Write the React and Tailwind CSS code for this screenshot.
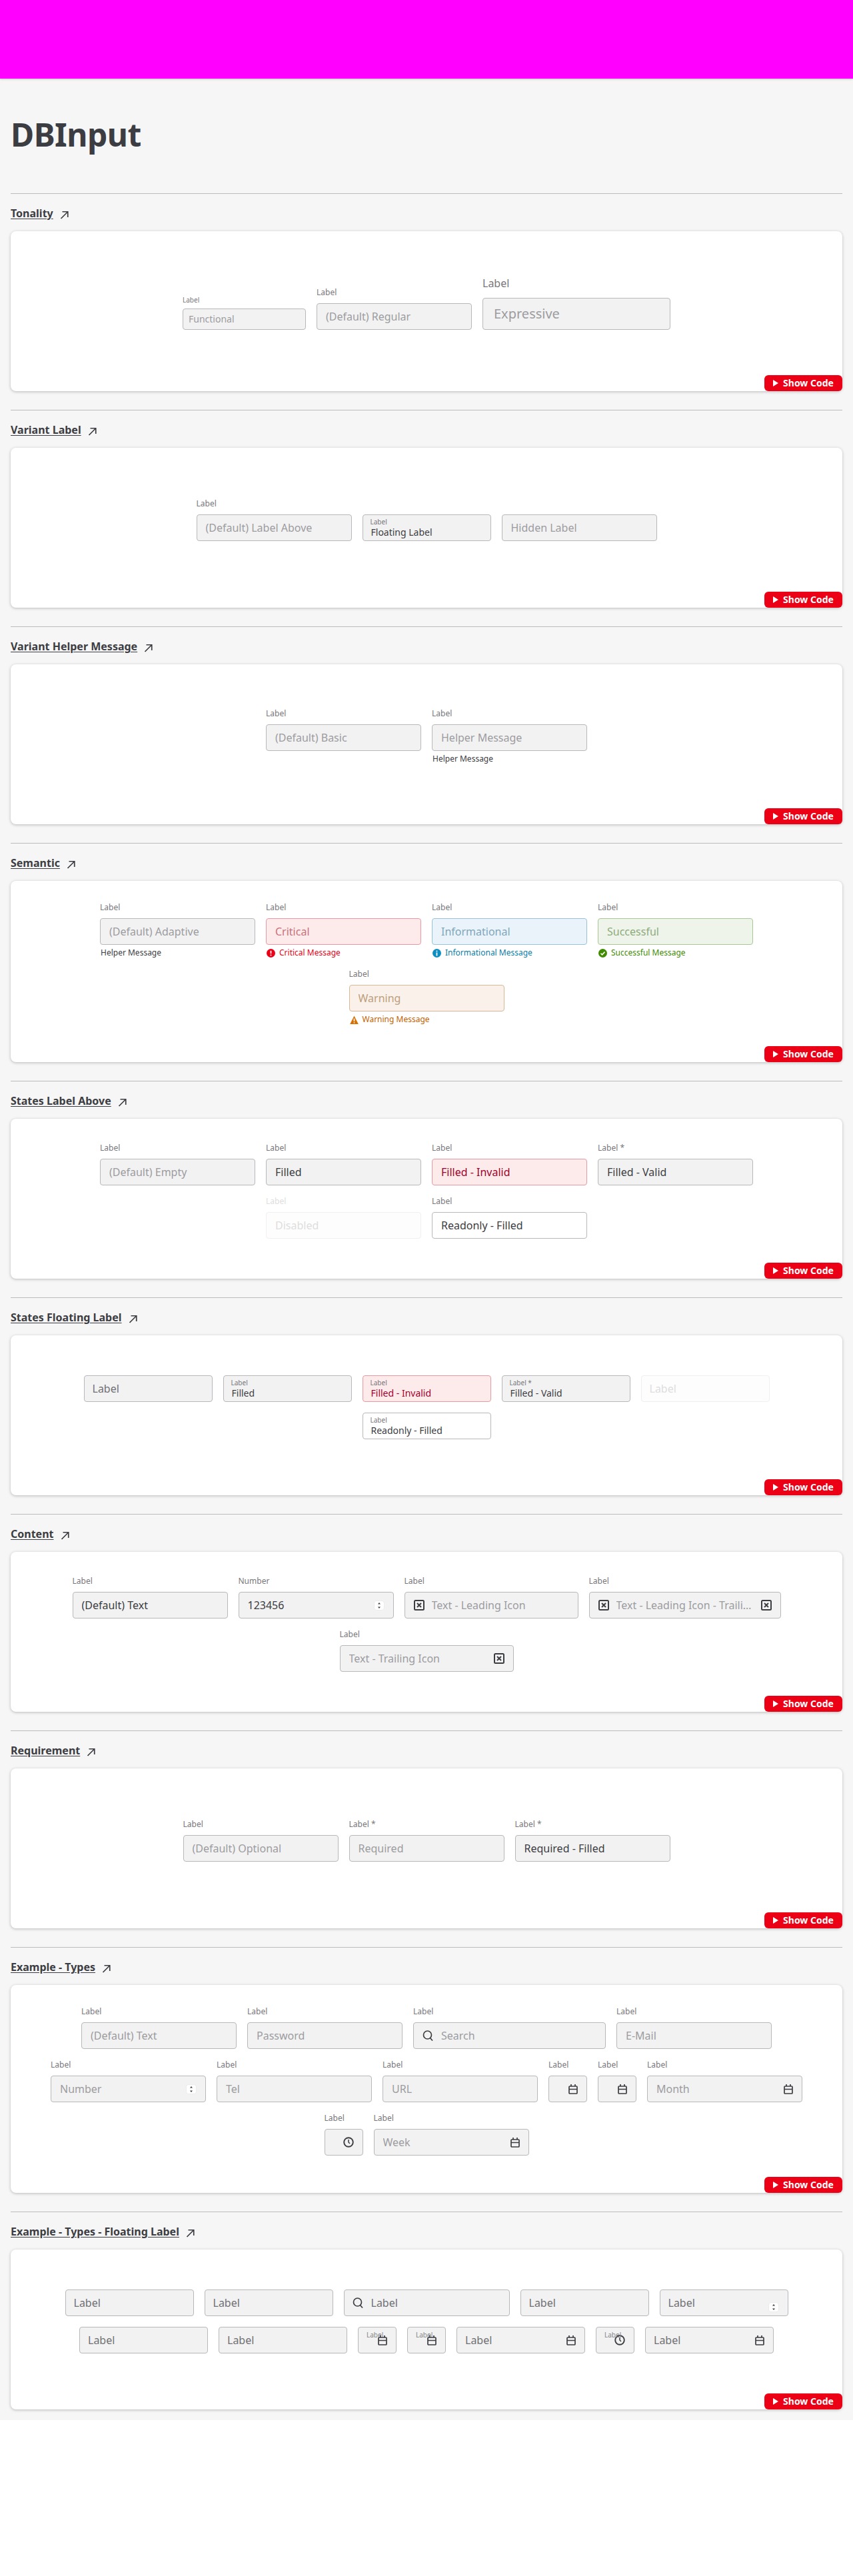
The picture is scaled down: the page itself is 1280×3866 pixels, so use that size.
import React from "react";

const tones = {
  neutral: { box: "bg-[#f2f2f2] border-[#b8b8bb]", ph: "text-[#9c9ca0]", val: "text-[#3c3d42]" },
  critical: { box: "bg-[#fdebec] border-[#e79aa1]", ph: "text-[#c9727b]", val: "text-[#a1002a]" },
  info: { box: "bg-[#eaf3f9] border-[#97c3d9]", ph: "text-[#7fa7bb]", val: "text-[#3c3d42]" },
  success: { box: "bg-[#eef4e9] border-[#a9c796]", ph: "text-[#8eab7e]", val: "text-[#3c3d42]" },
  warning: { box: "bg-[#f9f1ea] border-[#d7b896]", ph: "text-[#bd9f7d]", val: "text-[#3c3d42]" },
  disabled: { box: "bg-[#fdfdfd] border-[#f0f0f0]", ph: "text-[#dedede]", val: "text-[#dedede]" },
  readonly: { box: "bg-white border-[#b8b8bb]", ph: "text-[#9c9ca0]", val: "text-[#3c3d42]" },
};

const ArrowIcon = () => (
  <svg width="13" height="13" viewBox="0 0 13 13" fill="none" stroke="#3c3d42" strokeWidth="1.7" className="self-end mb-[3px]">
    <path d="M1.5 12 11.5 2M3.5 1.75h8.25V10" />
  </svg>
);

const XBoxIcon = () => (
  <svg width="16" height="16" viewBox="0 0 16 16" fill="none" stroke="#3c3d42" className="shrink-0">
    <rect x="1" y="1" width="14" height="14" rx="1.5" strokeWidth="2" />
    <path d="m5 5 6 6M11 5l-6 6" strokeWidth="2" />
  </svg>
);

const SearchIcon = () => (
  <svg width="17" height="16" viewBox="0 0 17 16" fill="none" stroke="#3c3d42" strokeWidth="1.7" className="shrink-0">
    <circle cx="7.5" cy="7" r="6" />
    <path d="m11.5 11.5 3.5 4" />
  </svg>
);

const CalendarIcon = () => (
  <svg width="14" height="15" viewBox="0 0 14 15" fill="none" stroke="#3c3d42" strokeWidth="1.7" className="shrink-0 relative">
    <rect x="1" y="3" width="12" height="11" rx="1" />
    <path d="M1 7.5h12M4 0v3M10 0v3" />
  </svg>
);

const ClockIcon = () => (
  <svg width="16" height="16" viewBox="0 0 16 16" fill="none" stroke="#3c3d42" className="shrink-0">
    <circle cx="8" cy="8" r="6.8" strokeWidth="1.9" />
    <path d="M8 4v4l2 2" strokeWidth="1.5" />
  </svg>
);

const Spin = ({ low }) => (
  <span className={`shrink-0 w-4 h-[15px] bg-white rounded-sm border border-[#ececec] flex items-center justify-center ${low ? "mt-3" : ""}`}>
    <svg width="6" height="11" viewBox="0 0 6 11" fill="#3c3d42">
      <path d="M3 1 5 3.5H1zM3 10 1 7.5h4z" />
    </svg>
  </span>
);

const msgIcons = {
  critical: (
    <svg width="13" height="13" viewBox="0 0 13 13" className="shrink-0">
      <circle cx="6.5" cy="6.5" r="6.5" fill="#ec0016" />
      <path d="M6.5 2.8v4.4" stroke="#fff" strokeWidth="1.8" />
      <circle cx="6.5" cy="9.6" r="1" fill="#fff" />
    </svg>
  ),
  info: (
    <svg width="13" height="13" viewBox="0 0 13 13" className="shrink-0">
      <circle cx="6.5" cy="6.5" r="6.5" fill="#0b8ec2" />
      <circle cx="6.5" cy="3.4" r="1" fill="#fff" />
      <path d="M6.5 5.5v5" stroke="#fff" strokeWidth="1.8" />
    </svg>
  ),
  success: (
    <svg width="13" height="13" viewBox="0 0 13 13" className="shrink-0">
      <circle cx="6.5" cy="6.5" r="6.5" fill="#408b00" />
      <path d="m3.5 6.8 2.1 2.1 3.9-4.3" stroke="#fff" strokeWidth="1.6" fill="none" />
    </svg>
  ),
  warning: (
    <svg width="13" height="13" viewBox="0 0 13 13" className="shrink-0">
      <path d="M6.5.5 12.8 13H.2z" fill="#d96f00" />
      <path d="M6.5 4.6v4.4" stroke="#fff" strokeWidth="1.6" />
      <circle cx="6.5" cy="10.8" r=".9" fill="#fff" />
    </svg>
  ),
};

const msgColors = {
  neutral: "text-[#3c3d42]",
  critical: "text-[#ec0016]",
  info: "text-[#0a7ea8]",
  success: "text-[#408b00]",
  warning: "text-[#c46200]",
};

// input look shared by label-above and floating variants
const Box = ({ w = "w-[233px]", h = "h-10", tone = "neutral", pad = "pl-[13px] pr-[13px]", size = "text-base", text, filled, lead, trail, textClass }) => {
  const t = tones[tone];
  return (
    <div className={`${w} ${h} ${t.box} ${pad} relative flex items-center border rounded`}>
      {lead && <span className="mr-[11px] flex shrink-0">{lead}</span>}
      {text && <span className={`flex-1 min-w-0 truncate ${size} ${textClass || (filled ? t.val : t.ph)}`}>{text}</span>}
      {trail && <span className="ml-auto pl-[14px] flex shrink-0">{trail}</span>}
    </div>
  );
};

const Field = ({ label = "Label", msg, msgTone = "neutral", labelClass = "text-[#77777b]", ...box }) => (
  <div className="flex flex-col">
    <div className={`h-4 mb-2 text-xs leading-4 ${labelClass}`}>{label}</div>
    <Box {...box} />
    {msg && (
      <div className={`mt-1 h-4 flex items-center gap-[6px] pl-px text-xs ${msgColors[msgTone]}`}>
        {msgIcons[msgTone]}
        <span>{msg}</span>
      </div>
    )}
  </div>
);

// label sits inside the box
const Float = ({ w = "w-[193px]", tone = "neutral", value, label = "Label", lead, trail, labelClass = "text-[#6f7074]", small }) => {
  const t = tones[tone];
  if (small) {
    return (
      <div className={`${w} h-10 ${t.box} relative flex items-center justify-end pr-[13px] border rounded`}>
        <span className="absolute left-3 top-[4px] text-[10px] leading-[14px] text-[#85858a]">Label</span>
        {trail}
      </div>
    );
  }
  return (
    <div className={`${w} h-10 ${t.box} pl-3 pr-[13px] flex items-center border rounded`}>
      {lead && <span className="mr-[11px] flex shrink-0">{lead}</span>}
      {value ? (
        <div className="flex flex-col">
          <span className="text-[10px] leading-[14px] -ml-px text-[#77777b]">{label}</span>
          <span className={`text-sm leading-[18px] ${t.val}`}>{value}</span>
        </div>
      ) : (
        <span className={`text-base ${tone === "disabled" ? t.ph : labelClass}`}>{label}</span>
      )}
      {trail && <span className="ml-auto flex shrink-0">{trail}</span>}
    </div>
  );
};

const Section = ({ title, align = "items-center", children }) => (
  <section className="border-t border-[#bcbcbe] pb-7 last:pb-0">
    <div className="h-[56px] pt-[17px] pb-[15px] flex items-start gap-[10px]">
      <a className="text-base leading-6 font-bold text-[#3c3d42] underline underline-offset-2">{title}</a>
      <ArrowIcon />
    </div>
    <div className="min-h-[240px] flex flex-col bg-white rounded-lg shadow-[0_1px_4px_rgba(0,0,0,0.25)]">
      <div className={`flex-1 flex flex-wrap justify-center content-center gap-4 p-8 ${align}`}>{children}</div>
      <button className="self-end w-[117px] h-6 flex items-center justify-center gap-[7px] rounded-md bg-[#ec0016] text-white text-sm font-bold">
        <svg width="8" height="10" viewBox="0 0 8 10" fill="#fff"><path d="M0 0 8 5 0 10z" /></svg>
        Show Code
      </button>
    </div>
  </section>
);

export default function App() {
  return (
    <div className="font-['Noto_Sans',sans-serif]">
      <div className="h-[118px] bg-[#ff00ff] shadow-[0_1px_3px_rgba(0,0,0,0.2)] relative" />
      <main className="bg-[#f6f6f6] px-4 pb-4">
        <h1 className="h-[172px] pt-[50px] text-5xl leading-[68px] font-bold tracking-[-0.5px] text-[#3c3d42]">DBInput</h1>

        <Section title="Tonality" align="items-end">
          <div className="flex flex-col">
            <div className="h-[14px] mb-[6px] text-[10px] leading-[14px] text-[#77777b]">Label</div>
            <Box w="w-[185px]" h="h-8" pad="pl-2" size="text-sm" text="Functional" />
          </div>
          <Field text="(Default) Regular" />
          <div className="flex flex-col">
            <div className="h-5 mb-3 text-base leading-5 text-[#77777b]">Label</div>
            <Box w="w-[282px]" h="h-12" pad="pl-4" size="text-xl" text="Expressive" />
          </div>
        </Section>

        <Section title="Variant Label" align="items-end">
          <Field text="(Default) Label Above" />
          <Float value="Floating Label" />
          <Box text="Hidden Label" />
        </Section>

        <Section title="Variant Helper Message" align="items-start">
          <Field text="(Default) Basic" />
          <Field text="Helper Message" msg="Helper Message" />
        </Section>

        <Section title="Semantic" align="items-start">
          <Field text="(Default) Adaptive" msg="Helper Message" />
          <Field text="Critical" tone="critical" msg="Critical Message" msgTone="critical" />
          <Field text="Informational" tone="info" msg="Informational Message" msgTone="info" />
          <Field text="Successful" tone="success" msg="Successful Message" msgTone="success" />
          <Field text="Warning" tone="warning" msg="Warning Message" msgTone="warning" />
        </Section>

        <Section title="States Label Above">
          <Field text="(Default) Empty" />
          <Field text="Filled" filled />
          <Field text="Filled - Invalid" filled tone="critical" />
          <Field label="Label *" text="Filled - Valid" filled />
          <Field text="Disabled" tone="disabled" labelClass="text-[#dedede]" />
          <Field text="Readonly - Filled" filled tone="readonly" />
        </Section>

        <Section title="States Floating Label">
          <Float />
          <Float value="Filled" />
          <Float value="Filled - Invalid" tone="critical" />
          <Float value="Filled - Valid" label="Label *" />
          <Float tone="disabled" />
          <Float value="Readonly - Filled" tone="readonly" />
        </Section>

        <Section title="Content">
          <Field text="(Default) Text" filled />
          <Field label="Number" text="123456" filled trail={<Spin />} />
          <Field w="w-[261px]" text="Text - Leading Icon" lead={<XBoxIcon />} />
          <Field w="w-[288px]" text="Text - Leading Icon - Trailing Icon" lead={<XBoxIcon />} trail={<XBoxIcon />} />
          <Field w="w-[261px]" text="Text - Trailing Icon" trail={<XBoxIcon />} />
        </Section>

        <Section title="Requirement">
          <Field text="(Default) Optional" />
          <Field label="Label *" text="Required" />
          <Field label="Label *" text="Required - Filled" filled />
        </Section>

        <Section title="Example - Types">
          <Field text="(Default) Text" />
          <Field text="Password" />
          <Field w="w-[289px]" text="Search" lead={<SearchIcon />} />
          <Field text="E-Mail" />
          <Field text="Number" trail={<Spin />} />
          <Field text="Tel" />
          <Field text="URL" />
          <Field w="w-[58px]" trail={<CalendarIcon />} />
          <Field w="w-[58px]" trail={<CalendarIcon />} />
          <Field text="Month" trail={<CalendarIcon />} />
          <Field w="w-[58px]" trail={<ClockIcon />} />
          <Field text="Week" trail={<CalendarIcon />} />
        </Section>

        <Section title="Example - Types - Floating Label">
          <Float />
          <Float />
          <Float w="w-[249px]" lead={<SearchIcon />} />
          <Float />
          <Float trail={<Spin low />} />
          <Float />
          <Float />
          <Float small w="w-[58px]" trail={<CalendarIcon />} />
          <Float small w="w-[58px]" trail={<CalendarIcon />} />
          <Float trail={<CalendarIcon />} />
          <Float small w="w-[58px]" trail={<ClockIcon />} />
          <Float trail={<CalendarIcon />} />
        </Section>
      </main>
    </div>
  );
}
